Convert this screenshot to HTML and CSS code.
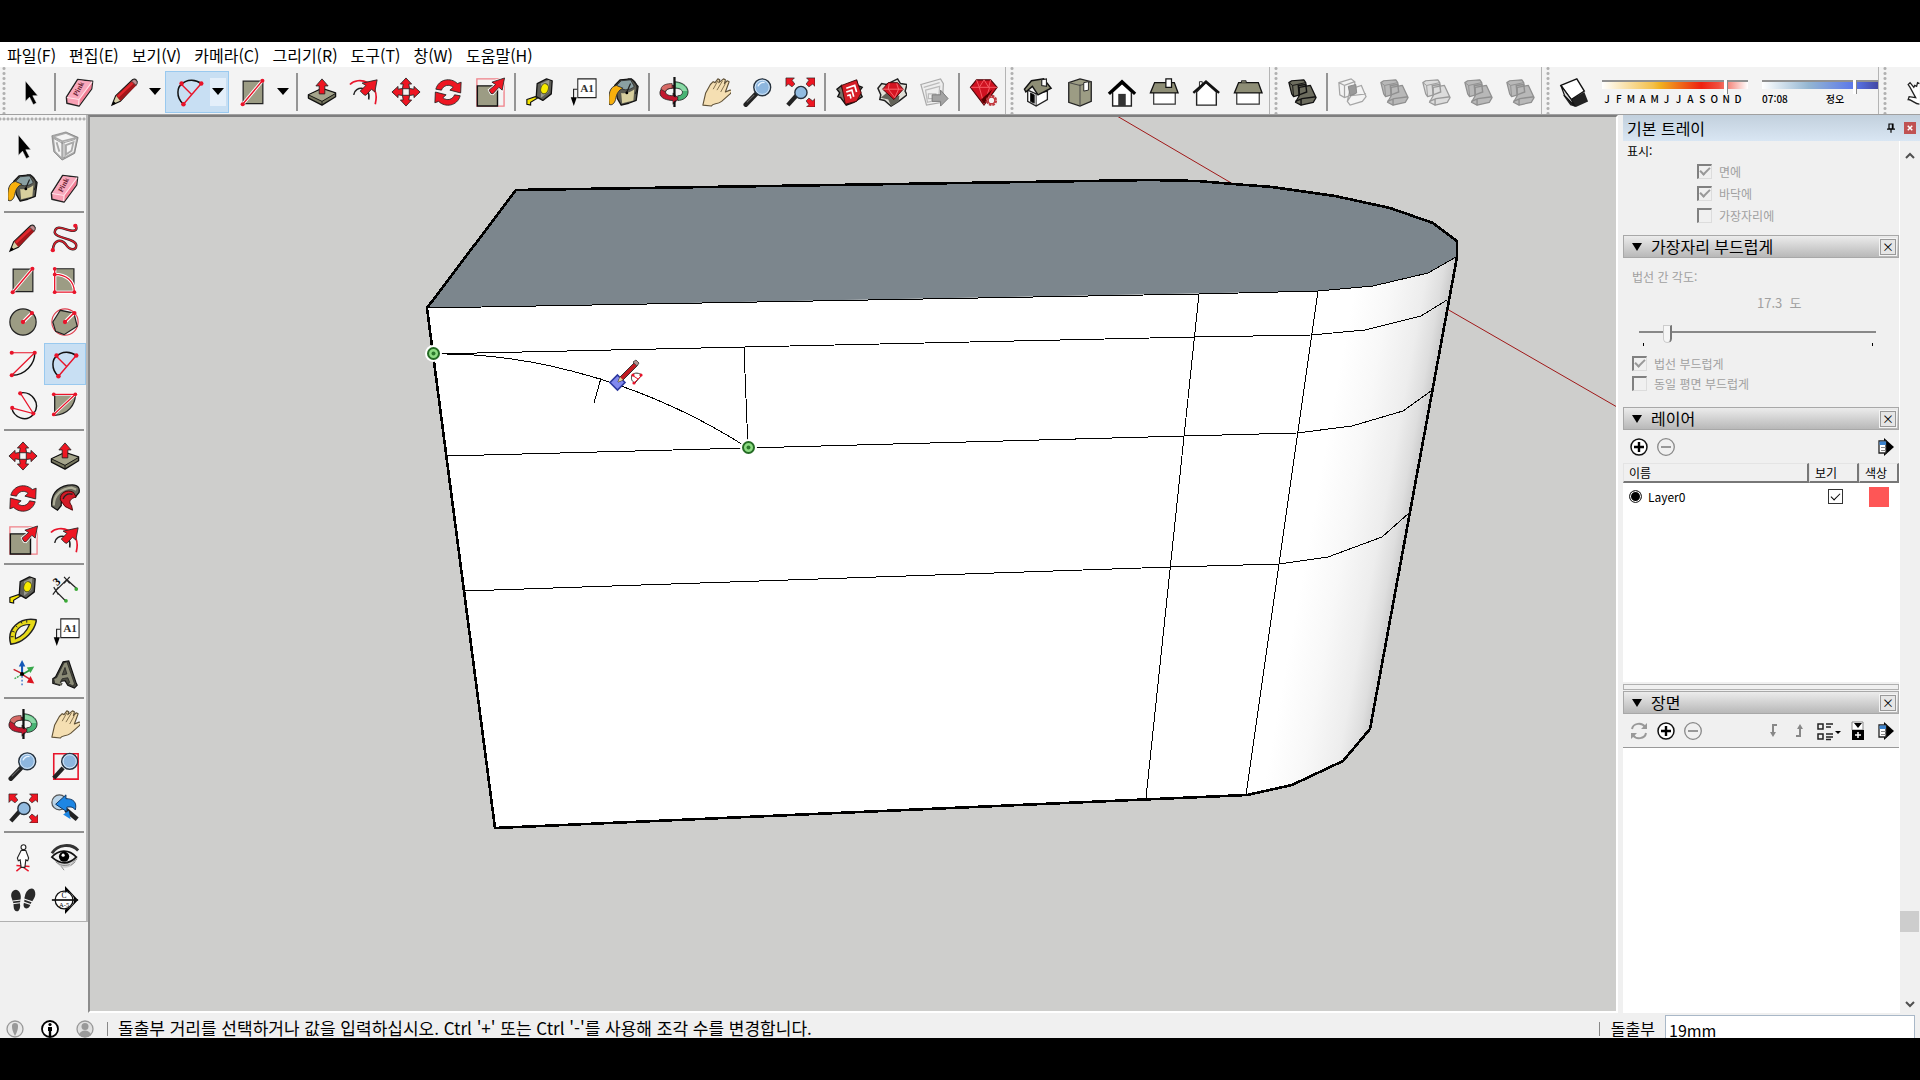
FILE: index.html
```html
<!DOCTYPE html>
<html lang="ko">
  <head>
    <meta charset="utf-8">
    <title>SketchUp</title>
    <link rel="stylesheet" href="styles.css">
  </head>
  <body>
    <!-- Icon set, every icon is drawn on a 32 x 32 grid -->
    <svg class="sprite" aria-hidden="true">
      <symbol id="i-select" viewBox="0 0 32 32"><path d="M11 4v22l4.500-4.500 4 8 3.500-1.800-4-7.700h5.500z" fill="#000" stroke="#fff" stroke-width=".6"/></symbol>
      <symbol id="i-eraser" viewBox="0 0 32 32">
        <path d="M13.500 2.500l16 2-1 8L15 31 2 28l-.5-6.500z" fill="#f8a0b4" stroke="#222" stroke-width="1.500" stroke-linejoin="round"/>
        <path d="M14 3.500l14.500 1.500L15 23.500 2.500 21.500z" fill="#f9a9bd"/><path d="M15.500 24l13-18-.5 6.500L15 30z" fill="#f27f95"/>
        <path d="M2 21.800l13 2.200L29 5M15 24l-.5 6" fill="none" stroke="#fde3e8" stroke-width="1.200"/>
        <text x="13" y="21" transform="rotate(-62 13 21)" font-size="8" font-family="Liberation Serif, serif" font-weight="bold" fill="#6b2433">Pink</text>
      </symbol>
      <symbol id="i-pencil" viewBox="0 0 32 32">
        <path d="M2 30l4-10L24 3c3-2 6 1 4.500 4L11 26z" fill="#d6d0a8" stroke="#111" stroke-width="1.200"/>
        <path d="M6.500 20L23 4.500l5 4.500L11 25.500z" fill="#a3171b"/><path d="M8.500 21L25 5.500" stroke="#e2262c" stroke-width="2.500"/>
        <path d="M23 4.500l5 4.500 1-2.500c0-3-3-5-5-3z" fill="#c08c90" stroke="#333" stroke-width=".8"/><path d="M2 30l1.800-4.500 2.700 2.700z"/>
      </symbol>
      <symbol id="i-arc2" viewBox="0 0 32 32">
        <path d="M9 29C0 21 3 10 7 8c6-7 16-5 21-1" fill="none" stroke="#111" stroke-width="1.600"/>
        <path d="M9 29L28 7M7 8l11 11" fill="none" stroke="#e8142a" stroke-width="1.500"/>
        <g fill="#e8142a"><circle cx="9" cy="29" r="2.400"/><circle cx="28" cy="7" r="2.400"/><circle cx="7" cy="7" r="2.400"/></g>
      </symbol>
      <symbol id="i-rect" viewBox="0 0 32 32">
        <path d="M5.500 4.500h21v24h-21z" fill="#9c9c84" stroke="#222" stroke-width="1.300"/>
        <path d="M5 29L26 4" stroke="#fff" stroke-width="3.500"/><path d="M5 29L26 4" stroke="#e8142a" stroke-width="1.500"/>
        <circle cx="5" cy="29" r="2.200" fill="#e8142a"/><circle cx="26" cy="4" r="2.200" fill="#e8142a"/>
      </symbol>
      <symbol id="i-push" viewBox="0 0 32 32">
        <path d="M1.500 19L16 12l14.500 5v4L16 30 1.500 22.500z" fill="#77775f" stroke="#111" stroke-width="1.400" stroke-linejoin="round"/>
        <path d="M2 19.300L16 13l14 4.500L16 25.500z" fill="#a5a58c"/><path d="M1.500 19L16 26l14.500-8.500M16 26v4" fill="none" stroke="#111"/>
        <path d="M13 18V9.500H9.500L16 2l6.500 7.500H19V18z" fill="#ee1622" stroke="#222" stroke-width=".9"/>
      </symbol>
      <symbol id="i-offset" viewBox="0 0 32 32">
        <path d="M1 8C9-1 34 4 28 29" fill="none" stroke="#e8142a" stroke-width="1.800"/>
        <path d="M5 19C6 9 24 9 21 24" fill="none" stroke="#222" stroke-width="1.600"/>
        <path d="M12 15l6-6-4-2.500L30 3l-2.500 13-3.500-3-6 6.500-2-.5z" fill="#ee1622" stroke="#222" stroke-width=".9"/>
      </symbol>
      <symbol id="i-move" viewBox="0 0 32 32">
        <g id="move-arm"><path d="M16 1l6 6.500h-3l.8 5h-7.600l.8-5h-3z" fill="#ee1622" stroke="#222" stroke-width=".9"/></g>
        <use href="#move-arm" transform="rotate(90 16 16)"/><use href="#move-arm" transform="rotate(180 16 16)"/><use href="#move-arm" transform="rotate(270 16 16)"/>
      </symbol>
      <symbol id="i-rotate" viewBox="0 0 32 32">
        <g id="rot-arm"><path d="M3 13C6 2 19 0 26 7l4-1.500-.5 11.500L18 14l3.500-3C17 7 11 9 9 14z" fill="#ee1622" stroke="#222" stroke-width=".9"/></g>
        <use href="#rot-arm" transform="rotate(180 16 16.500)"/>
      </symbol>
      <symbol id="i-scale" viewBox="0 0 32 32">
        <path d="M2 2h29v29H2z" fill="none" stroke="#f08088" stroke-width="1.400"/><path d="M2.500 9.500h21.500V31H2.500z" fill="#9c9c84" stroke="#111" stroke-width="1.500"/>
        <path d="M15 14l7-6-4-2.500L31.500 1 29 14l-3.500-3-6.500 7-2-.5z" fill="#ee1622" stroke="#fff" stroke-width="2.500"/>
        <path d="M15 14l7-6-4-2.500L31.500 1 29 14l-3.500-3-6.500 7-2-.5z" fill="#ee1622" stroke="#222" stroke-width=".9"/>
      </symbol>
      <symbol id="i-tape" viewBox="0 0 32 32">
        <path d="M2 24l9-3 3 1-8 5v3l-4-1z" fill="#f5e400" stroke="#111" stroke-width="1.200"/>
        <path d="M13 7l10-5 6 2-1 14-9 7-7-4z" fill="#5f5f58" stroke="#111" stroke-width="1.400" stroke-linejoin="round"/>
        <path d="M17 7l9-4-1 13-8 6z" fill="#9a9a90"/><ellipse cx="21" cy="12.500" rx="4" ry="5.500" transform="rotate(15 21 12)" fill="#f7ea00" stroke="#55551c"/>
      </symbol>
      <symbol id="i-text" viewBox="0 0 32 32">
        <path d="M11.500 2h19.500v20H11.500z" fill="#fff" stroke="#222" stroke-width="1.100"/><path d="M11 13H7v10" fill="none" stroke="#222" stroke-width="1.200"/><path d="M4 21.500h6.500L7.200 31z"/>
        <text x="14" y="16" font-family="Liberation Serif, serif" font-size="12" font-weight="bold" fill="#333">A1</text>
      </symbol>
      <symbol id="i-paint" viewBox="0 0 32 32">
        <path d="M6 9l6-6 12-1 7 8-2 15-8 3-8 2-4-7z" fill="#5c5c52" stroke="#111" stroke-width="1.400" stroke-linejoin="round"/>
        <path d="M13 17c5 1 11-1 14-4l-1 12-12 3z" fill="#d8cf9e"/><path d="M8 9l5-5 10-1 4 7c-5 5-14 5-19-1z" fill="#8aa0a3" stroke="#333"/>
        <path d="M20 2c9 0 12 9 8 16M23 7l-4 9" fill="none" stroke="#222" stroke-width="1.300"/><circle cx="19" cy="17" r="1.500"/>
        <path d="M0 29C-1 18 1 10 8 9l7 3c-5 2-7 6-8 12-1 4-4 7-7 5z" fill="#f8b00c" stroke="#333"/>
      </symbol>
      <symbol id="i-orbit" viewBox="0 0 32 32">
        <path d="M16 9C7 8 1 12 1 17c0 6 8 8 14 8v4l6-6-6-6v3c-6 0-8-2-8-4 0-3 4-4 9-4z" fill="#c2172e" stroke="#222" stroke-width=".9"/>
        <path d="M17 5c10 1 14 6 14 11 0 6-6 9-11 9v-5c4 0 5-2 5-4 0-3-4-4-8-4z" fill="#48b374" stroke="#222" stroke-width=".9"/>
        <path d="M2 13c1-5 7-6 12-6v5c-5 0-7 2-7 4z" fill="#d66a66" stroke="#222" stroke-width=".7"/><path d="M18 6c8 1 11 5 12 9h-5c-1-3-5-4-7-4z" fill="#8bd8a6"/><path d="M16.500 0v32" stroke="#111" stroke-width="2.400"/><path d="M14 20l6 3-5 4z" fill="#c2172e"/>
      </symbol>
      <symbol id="i-pan" viewBox="0 0 32 32"><path d="M2 30l3-13 5-9 3-3 2 1 3-4 2 1-1 3 5-4 2 1-1 4 3-3 2 1-4 11 5-2c3 0 2 2 0 4l-9 8c-5 4-9 1-11 5z" fill="#f5dfb2" stroke="#5f5137" stroke-width="1.200" stroke-linejoin="round"/><path d="M13 13l5-9M17 14l6-10M21 16l5-9" stroke="#7d6b49" fill="none"/></symbol>
      <symbol id="i-zoom" viewBox="0 0 32 32"><path d="M14 18L3 29.500" stroke="#222" stroke-width="5" stroke-linecap="round"/><path d="M12 19L4 27" stroke="#666" stroke-width="1.200"/><circle cx="20.500" cy="11" r="9" fill="#8db6de" stroke="#26313c" stroke-width="1.500"/><circle cx="20.500" cy="11" r="7.500" fill="none" stroke="#d7e8f6"/><path d="M16 10c1-3 4-5 7-4" stroke="#e8f4ff" stroke-width="1.500" fill="none"/></symbol>
      <symbol id="i-zoomext" viewBox="0 0 32 32">
        <path d="M12 20L3 30" stroke="#222" stroke-width="4.500"/><circle cx="17" cy="16.500" r="6.500" fill="#92bbe0" stroke="#26313c" stroke-width="1.500"/>
        <g fill="#ee1622" stroke="#222" stroke-width=".7"><path id="ze" d="M1 1h9L7.500 3.500l3 4-3 3-4-3L1 10z"/><use href="#ze" transform="translate(33 0) scale(-1 1)"/><use href="#ze" transform="rotate(180 16.500 16.500)"/></g>
      </symbol>
      <symbol id="i-warehouse" viewBox="0 0 32 32"><path d="M2 13l5-4 1 4 11-6 4-3 1 5 5 2-3 4 3 6-9 6-8 3-6-8-3-1 2-4z" fill="#74746a" stroke="#111" stroke-width="1.500"/><path d="M7 9l16-6 5 14-5 9-12 3z" fill="#d51d25" stroke="#3b0707"/><path d="M12 12l9-3 2 7M12 16l6-2 2 7M13 20l3-1 1 4" fill="none" stroke="#fff" stroke-width="1.800"/></symbol>
      <symbol id="i-extware" viewBox="0 0 32 32"><path d="M1 12l4-5 5 1 12-6 3 5 7 1-2 7 2 4-9 7-8 5-7-6-5-1 1-5z" fill="#e0e0d8" stroke="#222" stroke-width="1.600"/><path d="M4 22l8 2 3 7 8-5 1-6-14-3z" fill="#626258"/><path d="M6 13l6-7h10l6 7-10 11z" fill="#d41421" stroke="#4a0509"/><path d="M6 13h22M13 7l-1 6 7 9 4-9-2-6" stroke="#fc6b70" fill="none"/></symbol>
      <symbol id="i-send" viewBox="0 0 32 32"><path d="M2 8l21-6 3 5-1 20-17 3z" fill="#eee" stroke="#aaa" stroke-width="1.300"/><path d="M5 11l17-5M7 14l15-4-1 14-12 3zM10 18h8v5h-8z" fill="none" stroke="#bbb" stroke-width="1.300"/><path d="M14 19h9v-5l8 9-8 8v-5h-9z" fill="#a3a3a3" stroke="#777"/></symbol>
      <symbol id="i-gem" viewBox="0 0 32 32"><path d="M1.500 11L8 3h15l7 8-14 19z" fill="#cf1120" stroke="#50060b" stroke-width="1.200"/><path d="M8 3l3 8 5-8 5 8 2-8M2 11h28M11 11l5 18 6-18" fill="none" stroke="#f75d66"/><path d="M13 24l3 5 9-16z" fill="#500"/><circle cx="24" cy="25" r="4.500" fill="#f2f2f2" stroke="#bd3a3f" stroke-width="3" stroke-dasharray="2.500 1"/><circle cx="24" cy="25" r="3.500" fill="#f2f2f2" stroke="#c4383e" stroke-width="1.500"/></symbol>
      <symbol id="i-iso" viewBox="0 0 32 32"><path d="M5 14l9 4 12-3v9l-12 7-9-5z" fill="#fff" stroke="#222" stroke-width="1.400"/><path d="M14 18v13M8 17l4 2v9l-4-2z" stroke="#222"/><path d="M1.500 13L9 4l13-2 8 10-14 7-6-9-7 6z" fill="#8e8e76" stroke="#111" stroke-width="1.500"/><path d="M20 3l5-1v8l-5-1z" fill="#fff" stroke="#222" stroke-width="1.200"/></symbol>
      <symbol id="i-side" viewBox="0 0 32 32"><path d="M4 6l12-4 12 3v21l-12 5-12-4z" fill="#9c9c84" stroke="#222" stroke-width="1.400"/><path d="M16 8v23M4 6l12 3 12-4" stroke="#444" fill="none"/><path d="M20 6l5-1v9l-5 1z" fill="#fff" stroke="#222"/></symbol>
      <symbol id="i-front" viewBox="0 0 32 32"><path d="M6 16L16 7l10 9v15H6z" fill="#fff" stroke="#222" stroke-width="1.500"/><path d="M12 18h8v13h-8z" fill="#333"/><path d="M2 18L16 5l14 13" fill="none" stroke="#000" stroke-width="3.500"/></symbol>
      <symbol id="i-top" viewBox="0 0 32 32"><path d="M5 16h23v13H5z" fill="#fff" stroke="#333" stroke-width="1.300"/><path d="M6 6h21l4 11H1.500z" fill="#8e8e76" stroke="#111" stroke-width="1.400"/><path d="M18 2h6v9h-6z" fill="#fff" stroke="#111" stroke-width="1.300"/></symbol>
      <symbol id="i-back" viewBox="0 0 32 32"><path d="M6 16V30h21V16L16 6z" fill="#fff" stroke="#222" stroke-width="1.500"/><path d="M9 11V5h3v4" fill="#fff" stroke="#222"/><path d="M2.500 17L16 5l14 12" fill="none" stroke="#111" stroke-width="2.600"/></symbol>
      <symbol id="i-left" viewBox="0 0 32 32"><path d="M4 16h24v13H4z" fill="#fff" stroke="#333" stroke-width="1.300"/><path d="M6 6h21l4 11H1.500z" fill="#8e8e76" stroke="#111" stroke-width="1.400"/><path d="M9 6V4h5v2" fill="#8e8e76" stroke="#222"/></symbol>
      <symbol id="i-solids" viewBox="0 0 32 32">
        <path d="M2 6l3-2 13-1 2 3 1 11-14 4-2-3z" stroke-width="1.300" stroke-linejoin="round"/><path d="M2 6l4 3 14-3M6 9l1 12" fill="none"/>
        <path d="M13 11l12-2 6 13-3 5-13 3-6-3 4-7z" stroke-width="1.300" stroke-linejoin="round"/><path d="M9 26l7-3 15-2M15 23v7M12 9l8-1 1 8-8 3z" fill="none" stroke-width="1.500"/>
      </symbol>
      <symbol id="i-isect" viewBox="0 0 32 32"><g fill="none" stroke="#a5a5a5" stroke-width="1.300"><path d="M2 6l13-4 4 3v13L8 22l-5-3zM2 6l6 3 11-4M8 9v13M14 13l12-4 5 12-4 5-13 4-3-4zM11 26l4-6 16-2"/></g><path d="M12 10l8-2 1 9-7 3z" fill="#999" stroke="#888"/></symbol>
      <symbol id="i-shadow" viewBox="0 0 32 32"><path d="M4 19l9 5 14-8 4 10-13 6-6-2z" fill="#222"/><path d="M2 9l17-7 8 13-14 9z" fill="#fff" stroke="#111" stroke-width="1.500"/><path d="M2 9l11 15 4 7L6 20z" fill="#ddd" stroke="#111" stroke-width="1.300"/></symbol>
      <symbol id="i-touch" viewBox="0 0 32 32"><path d="M25 29c-5 0-8-5-12-5l1-3 7 1-6-11-2-3 2-2 4 5 1-2 2 1 1-4 2 1" fill="#fff" stroke="#222" stroke-width="1.400"/></symbol>
      <symbol id="i-component" viewBox="0 0 32 32"><g fill="none" stroke="#aaa" stroke-width="2"><path d="M3 6l14-4 12 5-3 16-13 7-8-8zM3 6l10 5 16-4M13 11v19M7 12l3 10M17 15l8-3-2 9-6 4z"/></g><g fill="none" stroke="#777" stroke-width=".7"><path d="M2 5l15-4 13 6-4 17-13 7-9-9zM4 8l9 5 14-4M15 13v16"/></g></symbol>
      <symbol id="i-freehand" viewBox="0 0 32 32"><path d="M3 29c1-12 9-12 14-6 4 6 11 7 11 1 0-8-22-7-23-14 1-9 11-3 17-2 5 1 8-1 5-6" fill="none" stroke="#222" stroke-width="2.600"/><path d="M3 29c1-12 9-12 14-6 4 6 11 7 11 1 0-8-22-7-23-14 1-9 11-3 17-2 5 1 8-1 5-6" fill="none" stroke="#d8202c" stroke-width="1.500"/><circle cx="3" cy="29" r="2.300" fill="#e8142a"/><circle cx="27" cy="3" r="2.300" fill="#e8142a"/></symbol>
      <symbol id="i-rotrect" viewBox="0 0 32 32"><path d="M5.500 4h20v24h-20z" fill="#9c9c84" stroke="#222" stroke-width="1.300"/><path d="M5 4v25h21C26 17 17 10 5 10" fill="none" stroke="#fff" stroke-width="3.500"/><path d="M5 4v25h21C26 17 17 10 5 10" fill="none" stroke="#e8142a" stroke-width="1.400"/><g fill="#e8142a"><circle cx="5" cy="4" r="2"/><circle cx="5" cy="10" r="2"/><circle cx="5" cy="29" r="2"/><circle cx="26" cy="29" r="2"/></g></symbol>
      <symbol id="i-circle" viewBox="0 0 32 32"><circle cx="16" cy="16" r="14" fill="#9c9c84" stroke="#222" stroke-width="1.300"/><path d="M16 16l9-9" stroke="#fff" stroke-width="4"/><path d="M16 16l9-9" stroke="#e8142a" stroke-width="1.600"/><circle cx="16" cy="16" r="2.300" fill="#e8142a"/><circle cx="25.500" cy="6.500" r="2.300" fill="#e8142a"/></symbol>
      <symbol id="i-polygon" viewBox="0 0 32 32"><circle cx="16" cy="16" r="14" fill="none" stroke="#e04050" stroke-width="1.200"/><path d="M3 16L11 3.500l14.500 3 3.500 14L15 29.500 6 26z" fill="#9c9c84" stroke="#222" stroke-width="1.300"/><path d="M16 16l9-9" stroke="#fff" stroke-width="4"/><path d="M16 16l9-9" stroke="#e8142a" stroke-width="1.600"/><circle cx="16" cy="16" r="2.300" fill="#e8142a"/><circle cx="26" cy="6.500" r="2.300" fill="#e8142a"/></symbol>
      <symbol id="i-arc" viewBox="0 0 32 32"><path d="M28.500 4C29 16 18 28 4.500 28" fill="none" stroke="#111" stroke-width="1.500"/><path d="M4 4h24.500L4 28" fill="none" stroke="#e8142a" stroke-width="1.300"/><g fill="#e8142a"><circle cx="4" cy="4" r="2.200"/><circle cx="28.500" cy="4" r="2.200"/><circle cx="4" cy="28" r="2.200"/></g></symbol>
      <symbol id="i-arc3" viewBox="0 0 32 32"><path d="M13 2C25 0 36 13 27 25 19 34 6 28 4 18" fill="none" stroke="#111" stroke-width="1.500"/><path d="M13 2l14 22L4 18" fill="none" stroke="#e8142a" stroke-width="1.300"/><g fill="#e8142a"><circle cx="13" cy="2.500" r="2.200"/><circle cx="27" cy="24" r="2.200"/><circle cx="4.500" cy="18" r="2.200"/></g></symbol>
      <symbol id="i-pie" viewBox="0 0 32 32"><path d="M5 4h22c0 11-8 21-22 22z" fill="#9c9c84" stroke="#222" stroke-width="1.400"/><path d="M4 3.500h23L4 25" fill="none" stroke="#fff" stroke-width="3"/><path d="M4 3.500h23L4 25" fill="none" stroke="#e8142a" stroke-width="1.300"/><g fill="#e8142a"><circle cx="4" cy="3.500" r="2"/><circle cx="27" cy="3.500" r="2"/><circle cx="4" cy="25" r="2"/></g></symbol>
      <symbol id="i-follow" viewBox="0 0 32 32"><path d="M2 25C0 9 12 2 24 2c6 0 8 4 7 8l-4 5c-4-5-16-3-15 9l-4 5z" fill="#66665a" stroke="#111" stroke-width="1.400"/><path d="M4 24C4 12 13 6 23 5l5 2" fill="none" stroke="#aeae98" stroke-width="2.500"/><path d="M25 10c-7-4-15 1-14 8l5 7 8 4-1-5c-4-4-1-8 5-9z" fill="#d41a26" stroke="#400"/><path d="M14 17c2-5 6-6 10-5" stroke="#222" fill="none" stroke-width="1.500"/></symbol>
      <symbol id="i-dim" viewBox="0 0 32 32"><path d="M6 17L18 5l11 10M6 17l11 11M4 13l5 8M9 13l-6 8M15 2l6 7M21 2l-6 7" stroke="#222" stroke-width="1.300" fill="none"/><circle cx="28" cy="15" r="2" fill="#39a935"/><circle cx="17" cy="27.500" r="2" fill="#39a935"/><text x="4" y="11" transform="rotate(-42 7 7)" font-size="12" font-weight="bold" font-family="Liberation Serif, serif">3</text></symbol>
      <symbol id="i-protractor" viewBox="0 0 32 32"><path d="M30 3C12 0-2 13 3 29l5-1C18 25 28 15 30 5z" fill="#e7da18" stroke="#222" stroke-width="1.600" stroke-linejoin="round"/><path d="M23 8C13 8 7 14 8 23c6-2 12-8 15-15z" fill="#f2f2f2" stroke="#222" stroke-width="1.300"/><path d="M3 21h3M4 15l3 1M8 9l2 2M14 5l1 2M20 3v3" stroke="#222"/></symbol>
      <symbol id="i-axes" viewBox="0 0 32 32"><path d="M15 16V6" stroke="#1458b8" stroke-width="2.200"/><path d="M11.500 8L15 1l3.500 7z" fill="#1458b8"/><path d="M15 18v10" stroke="#3972c8" stroke-width="1.500" stroke-dasharray="2 2"/><path d="M16 16l7-4" stroke="#24993e" stroke-width="2"/><path d="M20 9l8-1-4 7z" fill="#38a84b"/><path d="M7 21l7-4" stroke="#38a84b" stroke-width="1.500" stroke-dasharray="2 1"/><path d="M16 17l8 5M6 11l8 4" stroke="#c8202c" stroke-width="1.600"/><path d="M24 18l4 8-8-1z" fill="#dc1420"/><circle cx="15" cy="16" r="2.200"/></symbol>
      <symbol id="i-text3d" viewBox="0 0 32 32"><path d="M3 21l3-2L14 3l6-1 8 24 1 2-3 3-7-3-3-5-5 1-1 4-7-2z" fill="#4c4c42" stroke="#111" stroke-width="1.300"/><path d="M4 21l3-1 8-16 3-1 8 23-1 3-6-3 2-1-2-5-6 1-2 4 2 1-1 2-7-2zM13 17l5-1-2-7z" fill="#8b8b76" stroke="#222" stroke-width=".8" fill-rule="evenodd"/></symbol>
      <symbol id="i-zoomwin" viewBox="0 0 32 32"><path d="M4 3h26v27H4z" fill="none" stroke="#e8142a" stroke-width="1.700"/><path d="M14 18L4 29" stroke="#222" stroke-width="4.500"/><circle cx="21" cy="11" r="8.500" fill="#8db6de" stroke="#26313c" stroke-width="1.500"/><circle cx="21" cy="11" r="7" fill="none" stroke="#d7e8f6"/></symbol>
      <symbol id="i-prev" viewBox="0 0 32 32"><circle cx="10" cy="10" r="8" fill="#bad4e8" stroke="#555" stroke-width="1.300"/><path d="M17 18l12 10" stroke="#222" stroke-width="5"/><path d="M6 12l11-10v4c8 0 12 4 10 12-3-4-6-3-9-3v5z" fill="#1d86e4" stroke="#0a315f"/><path d="M14 23l8 5-2-9z" fill="#1d86e4"/></symbol>
      <symbol id="i-poscam" viewBox="0 0 32 32"><path d="M9 30l6-5 7 5M9 24l14 1" stroke="#e8142a" stroke-width="1.500" fill="none"/><path d="M14 8h5l3 8-1 3-2-1-1 8h-4l-1-8-2 1-1-3z" fill="#fff" stroke="#222" stroke-width="1.200"/><circle cx="16.500" cy="4.500" r="2.600" fill="#fff" stroke="#222" stroke-width="1.200"/></symbol>
      <symbol id="i-look" viewBox="0 0 32 32"><path d="M5 18c7 13 20 10 25-4z" fill="#d0d0d0"/><path d="M2 11C8 1 23 0 30 8" fill="none" stroke="#333" stroke-width="3"/><path d="M2 15c7-8 18-9 26 0-8 8-17 8-26 0z" fill="#eee" stroke="#111" stroke-width="1.800"/><circle cx="15" cy="14.500" r="5.500"/><circle cx="14" cy="13" r="1.700" fill="#fff"/><path d="M6 20c5 4 9 5 15 3M12 25l3 4M24 20l5-3M22 24l5-4" stroke="#888" fill="none"/></symbol>
      <symbol id="i-walk" viewBox="0 0 32 32"><path d="M4 14c-3-8 6-13 9-5 2 5-1 9 0 13 0 8-7 8-7 1 0-4-1-6-2-9zM18 12c1-8 10-12 11-4 1 6-4 9-5 13-3 7-9 4-7-2 1-3 0-5 1-7z" fill="#292929"/><path d="M5 17l9-1M5 20l8-1M17 15l9 3M16 18l9 3" stroke="#f2f2f2" stroke-width="1.200"/></symbol>
      <symbol id="i-section" viewBox="0 0 32 32"><path d="M16 1l14 15-14 15v-5c13-3 13-17 0-20z"/><circle cx="15" cy="16" r="9.500" fill="#fff" stroke="#111" stroke-width="1.400"/><path d="M2 16h28" stroke="#111" stroke-width="1.800"/><text x="15" y="14" text-anchor="middle" font-size="8" font-family="Liberation Serif, serif">C</text><text x="15" y="23" text-anchor="middle" font-size="7" font-family="Liberation Serif, serif">A-5</text></symbol>
      <!-- Small tray icons, 20 x 20 -->
      <symbol id="t-plus" viewBox="0 0 20 20"><circle cx="10" cy="10" r="8" fill="#fff" stroke="#111" stroke-width="1.500"/><path d="M5 10h10M10 5v10" stroke="#000" stroke-width="2.400"/></symbol>
      <symbol id="t-minus" viewBox="0 0 20 20"><circle cx="10" cy="10" r="8.300" fill="none" stroke="#888" stroke-width="1.300"/><path d="M5 10h10" stroke="#888" stroke-width="1.700"/></symbol>
      <symbol id="t-menu" viewBox="0 0 20 20"><path d="M8 1l10 9L8 19z"/><path d="M3 4h7v12H3z" fill="#fff" stroke="#222" stroke-width="1.300"/><path d="M3.500 4.500H10V8H3.500z" fill="#3b82cc"/><path d="M5 10.500h5M5 13.500h5" stroke="#888"/></symbol>
      <symbol id="t-refresh" viewBox="0 0 20 20"><path d="M3 8c1-6 10-7 13-2M17 12c-1 6-10 7-13 2" fill="none" stroke="#999" stroke-width="2"/><path d="M18 2v6h-6zM2 18v-6h6z" fill="#999"/></symbol>
      <symbol id="t-down" viewBox="0 0 20 20"><path d="M15 4h-4v10" fill="none" stroke="#888" stroke-width="2"/><path d="M8 11h6l-3 5z" fill="#888"/></symbol>
      <symbol id="t-up" viewBox="0 0 20 20"><path d="M7 15h4V6" fill="none" stroke="#888" stroke-width="2"/><path d="M8 8h6l-3-5z" fill="#888"/></symbol>
      <symbol id="t-list" viewBox="0 0 26 20"><path d="M2 3h5v5H2zM2 13h5v5H2z" fill="none" stroke="#222" stroke-width="1.500"/><path d="M10 3h7M10 6h5M10 13h7M10 16h7M10 18.500h5" stroke="#222" stroke-width="1.300"/><path d="M19 10h6l-3 3z"/></symbol>
      <symbol id="t-collapse" viewBox="0 0 20 20"><path d="M3 1h11v8H3z" fill="#fff" stroke="#888"/><path d="M5 2h8l-4 5zM3 9h12v10H3z"/><path d="M6 14h6M9 11v6" stroke="#fff" stroke-width="1.500"/></symbol>
    </svg>

    <div class="app">
      <nav class="menubar">
        <button>파일(F)</button>
        <button>편집(E)</button>
        <button>보기(V)</button>
        <button>카메라(C)</button>
        <button>그리기(R)</button>
        <button>도구(T)</button>
        <button>창(W)</button>
        <button>도움말(H)</button>
      </nav>

      <div class="toolbar">
        <div class="group">
          <button class="tool" aria-label="선택"><svg><use href="#i-select"/></svg></button>
          <i class="sep"></i>
          <button class="tool" aria-label="지우개"><svg><use href="#i-eraser"/></svg></button>
          <button class="tool drop" aria-label="선"><svg><use href="#i-pencil"/></svg><i class="arrow"></i></button>
          <button class="tool drop active" aria-label="2점 호"><svg><use href="#i-arc2"/></svg><i class="arrow"></i></button>
          <button class="tool drop" aria-label="직사각형"><svg><use href="#i-rect"/></svg><i class="arrow"></i></button>
          <i class="sep"></i>
          <button class="tool" aria-label="밀기/끌기"><svg><use href="#i-push"/></svg></button>
          <button class="tool" aria-label="오프셋"><svg><use href="#i-offset"/></svg></button>
          <button class="tool" aria-label="이동"><svg><use href="#i-move"/></svg></button>
          <button class="tool" aria-label="회전"><svg><use href="#i-rotate"/></svg></button>
          <button class="tool" aria-label="배율"><svg><use href="#i-scale"/></svg></button>
          <i class="sep"></i>
          <button class="tool" aria-label="줄자"><svg><use href="#i-tape"/></svg></button>
          <button class="tool" aria-label="텍스트"><svg><use href="#i-text"/></svg></button>
          <button class="tool" aria-label="페인트통"><svg><use href="#i-paint"/></svg></button>
          <i class="sep"></i>
          <button class="tool" aria-label="궤도"><svg><use href="#i-orbit"/></svg></button>
          <button class="tool" aria-label="이동 보기"><svg><use href="#i-pan"/></svg></button>
          <button class="tool" aria-label="확대/축소"><svg><use href="#i-zoom"/></svg></button>
          <button class="tool" aria-label="범위 확대"><svg><use href="#i-zoomext"/></svg></button>
          <i class="sep"></i>
          <button class="tool" aria-label="3D Warehouse"><svg><use href="#i-warehouse"/></svg></button>
          <button class="tool" aria-label="Extension Warehouse"><svg><use href="#i-extware"/></svg></button>
          <button class="tool" aria-label="LayOut으로 보내기" disabled><svg><use href="#i-send"/></svg></button>
          <i class="sep"></i>
          <button class="tool" aria-label="확장 프로그램 관리자"><svg><use href="#i-gem"/></svg></button>
        </div>
        <div class="group">
          <button class="tool" aria-label="등각"><svg><use href="#i-iso"/></svg></button>
          <button class="tool" aria-label="상단"><svg><use href="#i-side"/></svg></button>
          <button class="tool" aria-label="앞"><svg><use href="#i-front"/></svg></button>
          <button class="tool" aria-label="오른쪽"><svg><use href="#i-top"/></svg></button>
          <button class="tool" aria-label="뒤"><svg><use href="#i-back"/></svg></button>
          <button class="tool" aria-label="왼쪽"><svg><use href="#i-left"/></svg></button>
        </div>
        <div class="group">
          <button class="tool" aria-label="외부 셸"><svg class="solid-dark"><use href="#i-solids"/></svg></button>
          <i class="sep"></i>
          <button class="tool" aria-label="교차" disabled><svg><use href="#i-isect"/></svg></button>
          <button class="tool" aria-label="통합" disabled><svg class="solid"><use href="#i-solids"/></svg></button>
          <button class="tool" aria-label="빼기" disabled><svg class="solid-light"><use href="#i-solids"/></svg></button>
          <button class="tool" aria-label="자르기" disabled><svg class="solid"><use href="#i-solids"/></svg></button>
          <button class="tool" aria-label="분할" disabled><svg class="solid"><use href="#i-solids"/></svg></button>
        </div>
        <div class="group">
          <button class="tool" aria-label="그림자"><svg><use href="#i-shadow"/></svg></button>
          <div class="shadow-slider months">
            <input type="range" min="0" max="100" value="86" aria-label="날짜">
            <div class="scale"><span>J</span><span>F</span><span>M</span><span>A</span><span>M</span><span>J</span><span>J</span><span>A</span><span>S</span><span>O</span><span>N</span><span>D</span></div>
          </div>
          <div class="shadow-slider hours">
            <input type="range" min="0" max="100" value="81" aria-label="시간">
            <div class="scale"><span>07:08</span><span>정오</span></div>
          </div>
        </div>
        <div class="group last">
          <button class="tool" aria-label="상호 작용"><svg><use href="#i-touch"/></svg></button>
        </div>
      </div>

      <div class="main">
        <!-- Large tool set -->
        <aside class="toolset">
          <div class="tools">
            <button class="tool" aria-label="선택"><svg><use href="#i-select"/></svg></button>
            <button class="tool" aria-label="구성 요소 만들기" disabled><svg><use href="#i-component"/></svg></button>
            <button class="tool" aria-label="페인트통"><svg><use href="#i-paint"/></svg></button>
            <button class="tool" aria-label="지우개"><svg><use href="#i-eraser"/></svg></button>
          </div>
          <div class="tools">
            <button class="tool" aria-label="선"><svg><use href="#i-pencil"/></svg></button>
            <button class="tool" aria-label="자유 곡선"><svg><use href="#i-freehand"/></svg></button>
            <button class="tool" aria-label="직사각형"><svg><use href="#i-rect"/></svg></button>
            <button class="tool" aria-label="회전 직사각형"><svg><use href="#i-rotrect"/></svg></button>
            <button class="tool" aria-label="원"><svg><use href="#i-circle"/></svg></button>
            <button class="tool" aria-label="다각형"><svg><use href="#i-polygon"/></svg></button>
            <button class="tool" aria-label="호"><svg><use href="#i-arc"/></svg></button>
            <button class="tool active" aria-label="2점 호"><svg><use href="#i-arc2"/></svg></button>
            <button class="tool" aria-label="3점 호"><svg><use href="#i-arc3"/></svg></button>
            <button class="tool" aria-label="파이"><svg><use href="#i-pie"/></svg></button>
          </div>
          <div class="tools">
            <button class="tool" aria-label="이동"><svg><use href="#i-move"/></svg></button>
            <button class="tool" aria-label="밀기/끌기"><svg><use href="#i-push"/></svg></button>
            <button class="tool" aria-label="회전"><svg><use href="#i-rotate"/></svg></button>
            <button class="tool" aria-label="따라가기"><svg><use href="#i-follow"/></svg></button>
            <button class="tool" aria-label="배율"><svg><use href="#i-scale"/></svg></button>
            <button class="tool" aria-label="오프셋"><svg><use href="#i-offset"/></svg></button>
          </div>
          <div class="tools">
            <button class="tool" aria-label="줄자"><svg><use href="#i-tape"/></svg></button>
            <button class="tool" aria-label="치수"><svg><use href="#i-dim"/></svg></button>
            <button class="tool" aria-label="각도기"><svg><use href="#i-protractor"/></svg></button>
            <button class="tool" aria-label="텍스트"><svg><use href="#i-text"/></svg></button>
            <button class="tool" aria-label="축"><svg><use href="#i-axes"/></svg></button>
            <button class="tool" aria-label="3D 텍스트"><svg><use href="#i-text3d"/></svg></button>
          </div>
          <div class="tools">
            <button class="tool" aria-label="궤도"><svg><use href="#i-orbit"/></svg></button>
            <button class="tool" aria-label="이동 보기"><svg><use href="#i-pan"/></svg></button>
            <button class="tool" aria-label="확대/축소"><svg><use href="#i-zoom"/></svg></button>
            <button class="tool" aria-label="창 확대"><svg><use href="#i-zoomwin"/></svg></button>
            <button class="tool" aria-label="범위 확대"><svg><use href="#i-zoomext"/></svg></button>
            <button class="tool" aria-label="이전"><svg><use href="#i-prev"/></svg></button>
          </div>
          <div class="tools">
            <button class="tool" aria-label="카메라 배치"><svg><use href="#i-poscam"/></svg></button>
            <button class="tool" aria-label="둘러보기"><svg><use href="#i-look"/></svg></button>
            <button class="tool" aria-label="걷기"><svg><use href="#i-walk"/></svg></button>
            <button class="tool" aria-label="단면"><svg><use href="#i-section"/></svg></button>
          </div>
        </aside>

        <!-- Model view -->
        <div class="viewport">
          <svg viewBox="90 117 1526 894" preserveAspectRatio="xMinYMin slice">
            <defs>
              <linearGradient id="round" gradientUnits="userSpaceOnUse" x1="1413" y1="493" x2="1297" y2="472">
                <stop offset="0" stop-color="#cccccc"/>
                <stop offset=".08" stop-color="#dedede"/>
                <stop offset=".22" stop-color="#ededed"/>
                <stop offset=".5" stop-color="#f8f8f8"/>
                <stop offset=".8" stop-color="#ffffff"/>
              </linearGradient>
            </defs>
            <!-- red axis -->
            <path class="axis" d="M1117 116L1233 184M1447 309L1617 407"/>
            <!-- faces -->
            <path fill="#fff" d="M427 308L1318 291 1247 795 495 828z"/>
            <path fill="url(#round)" d="M1317 291L1373 286 1428 273 1456 257 1370 729 1343 761 1292 785 1246 795z"/>
            <path fill="#7c868d" d="M427 308L516 190 1150 180 1197 181 1233 184 1272 187 1335 196 1390 208 1433 223 1457 241V257L1428 273 1373 286 1318 291z"/>
            <!-- edges -->
            <path class="edge" d="M427 308L1199 294 1318 291 1373 286 1428 273 1456 257"/>
            <path class="edge" d="M433 354L790 346 1195 337 1311 335 1365 330 1421 316 1447 300"/>
            <path class="edge" d="M447 456L748 448 1185 436 1297 433 1352 426 1403 411 1431 391"/>
            <path class="edge" d="M465 591L1171 567 1279 564 1328 557 1382 537 1409 513"/>
            <path class="edge" d="M1199 294L1146 798M1318 291L1246 795M744 348L748 448"/>
            <path class="edge" d="M433 354C540 352 655 388 748 448M601 378L594 403"/>
            <path class="profile" d="M427 308L516 190 1150 180 1197 181 1233 184 1272 187 1335 196 1390 208 1433 223 1457 241V257L1370 729 1343 761 1292 785 1247 795 495 828z"/>
            <!-- end points and cursor -->
            <g class="endpoint"><circle cx="433.500" cy="353.500" r="8.500"/><circle cx="433.500" cy="353.500" r="5.500"/><circle cx="433.500" cy="353.500" r="2"/></g>
            <g class="endpoint"><circle cx="748.500" cy="447.500" r="8.500"/><circle cx="748.500" cy="447.500" r="5.500"/><circle cx="748.500" cy="447.500" r="2"/></g>
            <path d="M617.500 375l7.500 7.500-7.500 7.500-7.500-7.500z" fill="#8088ee" stroke="#2c389e" stroke-width="1.600"/>
            <path d="M618 382l2-5 15-15 3 3-15 15z" fill="#c01c22" stroke="#333"/><path d="M618 382l2-5 3 3z" fill="#ddd3a0"/><path d="M633 362l3-2 3 3-2 3z" fill="#b09090" stroke="#555"/>
            <path d="M632 375c3-3 7-2 10 0l-7 8c-4-2-4-5-3-8z" fill="#fff" stroke="#333"/><path d="M634 383l8-8M632 375l6 4" fill="none" stroke="#e8142a"/><g fill="#e8142a"><circle cx="633" cy="375" r="1.600"/><circle cx="641" cy="375" r="1.600"/><circle cx="634" cy="383" r="1.600"/></g>
          </svg>
        </div>

        <!-- Tray -->
        <aside class="tray">
          <div class="tray-title">
            <span>기본 트레이</span>
            <button class="pin" aria-label="고정"><svg viewBox="0 0 10 12"><path d="M2.500 1h5v6h-5zM0 7.500h10M5 8v4" fill="none" stroke="#000" stroke-width="1.500"/><path d="M6 1h1.500v6H6z"/></svg></button>
            <button class="tray-close" aria-label="닫기"><svg viewBox="0 0 8 8"><path d="M1 1l6 6M7 1L1 7" stroke="#fff" stroke-width="2"/></svg></button>
          </div>
          <div class="tray-body">
            <div class="panels">
              <section class="show">
                <p>표시:</p>
                <label><input type="checkbox" checked disabled>면에</label>
                <label><input type="checkbox" checked disabled>바닥에</label>
                <label><input type="checkbox" disabled>가장자리에</label>
              </section>

              <h2><span>가장자리 부드럽게</span><button aria-label="닫기">×</button></h2>
              <section class="soften">
                <label for="angle">법선 간 각도:</label>
                <output for="angle">17.3 &nbsp;도</output>
                <input type="range" id="angle" min="0" max="180" value="19" disabled>
                <div class="ticks"><i></i><i></i></div>
                <label><input type="checkbox" checked disabled>법선 부드럽게</label>
                <label><input type="checkbox" disabled>동일 평면 부드럽게</label>
              </section>

              <h2><span>레이어</span><button aria-label="닫기">×</button></h2>
              <section class="layers">
                <div class="bar">
                  <button aria-label="레이어 추가"><svg><use href="#t-plus"/></svg></button>
                  <button aria-label="레이어 삭제"><svg><use href="#t-minus"/></svg></button>
                  <button class="push-right" aria-label="세부 정보"><svg><use href="#t-menu"/></svg></button>
                </div>
                <table>
                  <thead>
                    <tr><th class="name">이름</th><th class="visible">보기</th><th>색상</th></tr>
                  </thead>
                  <tbody>
                    <tr>
                      <td><label><input type="radio" name="layer" checked>Layer0</label></td>
                      <td><input type="checkbox" checked aria-label="보기"></td>
                      <td><button class="swatch" aria-label="색상"></button></td>
                    </tr>
                  </tbody>
                </table>
              </section>

              <div class="splitter"></div>
              <h2><span>장면</span><button aria-label="닫기">×</button></h2>
              <section class="scenes">
                <div class="bar">
                  <button aria-label="장면 업데이트"><svg><use href="#t-refresh"/></svg></button>
                  <button aria-label="장면 추가"><svg><use href="#t-plus"/></svg></button>
                  <button aria-label="장면 제거"><svg><use href="#t-minus"/></svg></button>
                  <button class="push-right" aria-label="아래로"><svg><use href="#t-down"/></svg></button>
                  <button aria-label="위로"><svg><use href="#t-up"/></svg></button>
                  <button class="wide" aria-label="보기 옵션"><svg><use href="#t-list"/></svg></button>
                  <button aria-label="세부 정보 표시"><svg><use href="#t-collapse"/></svg></button>
                  <button aria-label="메뉴"><svg><use href="#t-menu"/></svg></button>
                </div>
                <div class="scene-list"></div>
              </section>
            </div>
            <div class="scrollbar">
              <button aria-label="위로 스크롤"><svg viewBox="0 0 10 8"><path d="M1 6l4-4 4 4" fill="none" stroke="#505050" stroke-width="2"/></svg></button>
              <div class="track"><div class="thumb"></div></div>
              <button aria-label="아래로 스크롤"><svg viewBox="0 0 10 8"><path d="M1 2l4 4 4-4" fill="none" stroke="#505050" stroke-width="2"/></svg></button>
            </div>
          </div>
        </aside>
      </div>

      <footer class="statusbar">
        <button aria-label="위치"><svg viewBox="0 0 20 20"><circle cx="10" cy="10" r="8" fill="#e8e8e8" stroke="#999" stroke-width="1.300"/><path d="M10 17C7 11 7 9 7 7a3 3 0 0 1 6 0c0 2 0 4-3 10z" fill="#999"/></svg></button>
        <button aria-label="제작자"><svg viewBox="0 0 20 20"><circle cx="10" cy="10" r="8" fill="#fff" stroke="#000" stroke-width="1.800"/><circle cx="10" cy="5.500" r="1.600"/><path d="M8 8h4v4h-.8v5H8.800v-5H8z"/></svg></button>
        <button aria-label="로그인"><svg viewBox="0 0 20 20"><circle cx="10" cy="10" r="8" fill="#e0e0e0" stroke="#999" stroke-width="1.300"/><circle cx="10" cy="7.500" r="3.500" fill="#999"/><path d="M4 16c1-6 11-6 12 0-3 3-9 3-12 0z" fill="#999"/></svg></button>
        <p class="hint">돌출부 거리를 선택하거나 값을 입력하십시오. Ctrl '+' 또는 Ctrl '-'를 사용해 조각 수를 변경합니다.</p>
        <label for="vcb">돌출부</label>
        <input type="text" id="vcb" value="19mm">
      </footer>
    </div>
  </body>
</html>
```

FILE: styles.css
```css
/* Whole window */
* {
  box-sizing: border-box;
}

body {
  margin: 0;
  height: 100vh;
  padding: 42px 0;
  background-color: #000;
  font-family: "Noto Sans CJK KR", "Noto Sans", sans-serif;
  font-size: 16px;
  color: #000;
  overflow: hidden;
}

button {
  margin: 0;
  padding: 0;
  border: none;
  background: none;
  color: inherit;
  font: inherit;
}

p,
h2 {
  margin: 0;
  font-weight: normal;
}

.sprite {
  display: none;
}

.app {
  display: flex;
  flex-direction: column;
  height: 100%;
  background-color: #f0f0f0; /* Window grey */
  overflow: hidden;
}

/* Menu bar */
.menubar {
  display: flex;
  flex: none;
  gap: 13px;
  height: 25px;
  padding-left: 7px;
  background-color: #fff;
  line-height: 27px;
}

/* Toolbar */
.toolbar {
  display: flex;
  flex: none;
  height: 48px;
  background-color: #f3f3f3;
  border-bottom: 1px solid #a0a0a0;
  overflow: hidden;
}

.group {
  display: flex;
  flex: none;
  align-items: center;
  padding: 2px 0 0 9px;
  margin-right: 2px;
  border-right: 1px solid #b4b4b4;
  background: radial-gradient(circle, #b0b0b0 1px, transparent 2px) 2px 4px / 4px 5px repeat-y;
}

.group.last {
  flex: 1;
  margin: 0;
  border: none;
}

.tool {
  display: flex;
  flex: none;
  align-items: center;
  justify-content: center;
  width: 42px;
  height: 42px;
}

.tool svg {
  width: 30px;
  height: 30px;
}

.tool.drop {
  width: 64px;
  justify-content: space-between;
  padding: 0 2px 0 9px;
}

.tool.active {
  background-color: #c8dff3; /* Light blue */
  border: 1px solid #99c9ef;
}

.arrow {
  display: flex;
  align-items: center;
  justify-content: center;
  width: 16px;
  height: 28px;
}

.arrow::before {
  content: "";
  border: 6px solid transparent;
  border-top: 7px solid #000;
  border-bottom: none;
}

.active .arrow {
  background-color: #e4effa;
}

.sep {
  width: 2px;
  height: 38px;
  margin: 0 3px;
  background-color: #959595;
}

.solid {
  fill: #b8b8b8;
  stroke: #8f8f8f;
}

.solid-light {
  fill: #dcdcdc;
  stroke: #999;
}

.solid-dark {
  fill: #6c6c5e;
  stroke: #111;
}

/* Shadow date and time */
.shadow-slider {
  display: flex;
  flex-direction: column;
  width: 146px;
  margin: 0 0 0 7px;
}

.shadow-slider.hours {
  width: 116px;
  margin-left: 14px;
}

.shadow-slider input {
  appearance: none;
  width: 100%;
  height: 14px;
  margin: 0;
  background: linear-gradient(to right, #fff, #f3c04a 35%, #f0b020 40%, #ee2010 68%, #f05040 80%, #fff) no-repeat 0 2px / 100% 7px;
}

.shadow-slider.hours input {
  background-image: linear-gradient(to right, #fff, #94b6d2 40%, #5a76ea 80%, #4348a4);
}

.shadow-slider input::-webkit-slider-runnable-track {
  height: 14px;
  background: linear-gradient(#909090, #909090) no-repeat 0 0 / 100% 2px;
}

.shadow-slider input::-webkit-slider-thumb {
  appearance: none;
  width: 4px;
  height: 14px;
  background-color: #fff;
  border-right: 1px solid #888;
}

.scale {
  display: flex;
  justify-content: space-around;
  font-size: 10px;
  font-weight: 500;
  line-height: 10px;
}

.scale span {
  flex: 1;
  text-align: center;
}

.months .scale {
  margin: 0 4px 0 -1px;
}

.hours .scale span {
  flex: none;
}

.hours .scale {
  justify-content: flex-start;
  gap: 38px;
}

/* Middle part */
.main {
  display: flex;
  flex: 1;
  min-height: 0;
}

.toolset {
  flex: none;
  align-self: flex-start;
  width: 88px;
  padding: 10px 0 0 2px;
  border-right: 2px solid #b8b8b8;
  border-bottom: 1px solid #b0b0b0;
  background: radial-gradient(circle, #b0b0b0 1px, transparent 2px) 2px 2px / 4px 4px repeat-x #f4f4f4;
}

.tools {
  display: flex;
  flex-wrap: wrap;
}

.tools + .tools::before {
  content: "";
  width: 80px;
  height: 2px;
  margin: 2px 2px 4px;
  background-color: #909090;
}

/* Model view */
.viewport {
  flex: 1;
  min-width: 0;
  border: 2px solid #fff;
  border-top-color: #7e7e7e;
  border-left-color: #8c8c8c;
  background-color: #cececc;
}

.viewport svg {
  display: block;
  width: 100%;
  height: 100%;
}

.axis {
  fill: none;
  stroke: #a01818;
  stroke-width: 1;
}

.edge {
  fill: none;
  stroke: #000;
  stroke-width: 1;
  shape-rendering: crispEdges;
}

.profile {
  fill: none;
  stroke: #000;
  stroke-width: 2.6;
  stroke-linejoin: round;
  shape-rendering: crispEdges;
}

.endpoint circle:nth-child(1) {
  fill: #fff;
}

.endpoint circle:nth-child(2) {
  fill: #8cdc82;
  stroke: #256b25;
  stroke-width: 2;
}

.endpoint circle:nth-child(3) {
  fill: #2b7a2b;
}

/* Tray */
.tray {
  display: flex;
  flex-direction: column;
  flex: none;
  width: 302px;
  padding-left: 5px;
}

.tray-title {
  display: flex;
  flex: none;
  align-items: center;
  height: 26px;
  padding: 0 4px 0 4px;
  background: linear-gradient(#c2d0dd, #d9e6f3);
}

.tray-title span {
  flex: 1;
}

.pin svg {
  display: block;
  width: 8px;
  height: 10px;
  margin-right: 9px;
}

.tray-close {
  display: flex;
  align-items: center;
  justify-content: center;
  width: 12px;
  height: 12px;
  background-color: #c05252;
}

.tray-close svg {
  width: 6px;
  height: 6px;
}

.tray-body {
  display: flex;
  flex: 1;
  min-height: 0;
}

.panels {
  display: flex;
  flex-direction: column;
  flex: 1;
}

.panels section {
  font-size: 12px;
}

.panels h2 {
  display: flex;
  flex: none;
  align-items: center;
  height: 23px;
  padding: 0 2px 0 8px;
  border: 1px solid #a8a8a8;
  background: linear-gradient(#ececec, #b8b8b8);
  font-size: 16px;
  line-height: 21px;
}

.panels h2::before {
  content: "";
  margin-right: 9px;
  border: 5px solid transparent;
  border-top: 8px solid #000;
  border-bottom: none;
}

.panels h2 span {
  flex: 1;
}

.panels h2 button {
  width: 16px;
  height: 16px;
  border: 1px solid #999;
  outline: 1px solid #f4f4f4;
  background-color: #e6e6e6;
  font-size: 12px;
  line-height: 14px;
}

.panels input[type="checkbox"] {
  appearance: none;
  display: flex;
  align-items: center;
  justify-content: center;
  width: 15px;
  height: 15px;
  margin: 0 7px 0 0;
  border: 2px solid #808080;
  border-right: 1px solid #dcdcdc;
  border-bottom: 1px solid #dcdcdc;
}

.panels input[type="checkbox"]:checked::before {
  content: "";
  width: 8px;
  height: 4px;
  margin-bottom: 3px;
  border-left: 2px solid #999;
  border-bottom: 2px solid #999;
  transform: rotate(-45deg);
}

.panels label {
  display: flex;
  align-items: center;
}

.show {
  height: 94px;
}

.show p {
  padding-left: 4px;
  line-height: 19px;
}

.show label {
  height: 22px;
  margin-left: 74px;
  color: #a0a0a0;
}

/* Soften edges */
.soften {
  height: 149px;
  padding: 8px 9px 0 9px;
  color: #a0a0a0;
}

.soften label {
  height: 20px;
}

.soften output {
  display: block;
  padding-left: 125px;
  margin-top: 7px;
  font-size: 13px;
  line-height: 20px;
}

.soften input[type="range"] {
  appearance: none;
  display: block;
  width: 237px;
  height: 18px;
  margin: 12px 0 0 7px;
  background: linear-gradient(#888, #888) no-repeat 0 6px / 100% 2px;
}

.soften input[type="range"]::-webkit-slider-thumb {
  appearance: none;
  width: 9px;
  height: 18px;
  background-color: #f6f6f6;
  border: 1px solid #ccc;
  border-right: 2px solid #777;
  border-radius: 0 0 5px 5px;
}

.ticks {
  display: flex;
  justify-content: space-between;
  width: 230px;
  height: 10px;
  margin-left: 11px;
}

.ticks i {
  width: 1px;
  height: 3px;
  background-color: #000;
}

/* Layers and scenes */
.bar {
  display: flex;
  align-items: center;
  gap: 7px;
  height: 33px;
  padding: 0 3px 0 6px;
}

.bar button,
.bar svg {
  display: block;
  width: 20px;
  height: 20px;
}

.bar .wide,
.bar .wide svg {
  width: 26px;
}

.bar .push-right {
  margin-left: auto;
}

.layers {
  display: flex;
  flex-direction: column;
  height: 252px;
  background: linear-gradient(#f0f0f0, #f0f0f0) no-repeat 0 0 / 100% 33px #fff;
}

table {
  width: 100%;
  border-collapse: separate;
  border-spacing: 0;
  table-layout: fixed;
}

th {
  height: 20px;
  padding: 0 5px;
  border: 1px solid #e4e4e4;
  border-right: 2px solid #777;
  border-bottom: 2px solid #777;
  background-color: #f0f0f0;
  font-weight: normal;
  line-height: 16px;
  text-align: left;
}

th.name {
  width: 186px;
}

th.visible {
  width: 50px;
}

td {
  height: 27px;
  padding: 0 6px;
}

td .swatch {
  display: block;
  width: 20px;
  height: 20px;
  margin-left: 4px;
  background-color: #fe5656; /* Layer colour */
}

.layers td input[type="checkbox"] {
  margin-left: 13px;
  border: 1px solid #333;
}

.layers td input[type="checkbox"]:checked::before {
  border-width: 1px;
  border-color: #000;
}

input[type="radio"] {
  appearance: none;
  width: 13px;
  height: 13px;
  margin: 0 6px 0 0;
  border: 1px solid #333;
  border-radius: 50%;
  background-color: #000;
  box-shadow: inset 0 0 0 1px #fff;
}

.splitter {
  flex: none;
  height: 6px;
  margin: 2px 0 1px;
  border: 1px solid #b0b0b0;
}

.scenes {
  display: flex;
  flex-direction: column;
  flex: 1;
}

.scene-list {
  flex: 1;
  border-top: 1px solid #999;
  background-color: #fff;
}

/* Tray scrollbar */
.scrollbar {
  display: flex;
  flex-direction: column;
  flex: none;
  width: 21px;
  padding-right: 1px;
  border-left: 1px solid #fff;
}

.scrollbar button {
  height: 24px;
}

.scrollbar svg {
  width: 10px;
  height: 8px;
}

.track {
  display: flex;
  flex-direction: column;
  justify-content: flex-end;
  flex: 1;
  padding-bottom: 57px;
}

.thumb {
  height: 21px;
  background-color: #cdcdcd;
}

/* Status bar */
.statusbar {
  display: flex;
  flex: none;
  align-items: flex-start;
  height: 25px;
  padding: 2px 5px 0 5px;
  overflow: hidden;
}

.statusbar svg {
  display: block;
  width: 20px;
  height: 20px;
  margin: 4px 15px 0 0;
}

.hint {
  flex: 1;
  position: relative;
  padding-left: 8px;
  font-size: 17px;
}

.hint,
.statusbar label {
  padding-top: 3px;
  line-height: 20px;
  white-space: nowrap;
}

.hint::before,
.hint::after {
  content: "";
  position: absolute;
  left: -3px;
  top: 7px;
  width: 1px;
  height: 14px;
  background-color: #888;
}

.hint::after {
  left: auto;
  right: 11px;
}

.statusbar input {
  width: 250px;
  height: 30px;
  margin-left: 10px;
  padding: 0 3px;
  border: 1px solid #a9b8c8;
  background-color: #fff;
  font: inherit;
}
```
